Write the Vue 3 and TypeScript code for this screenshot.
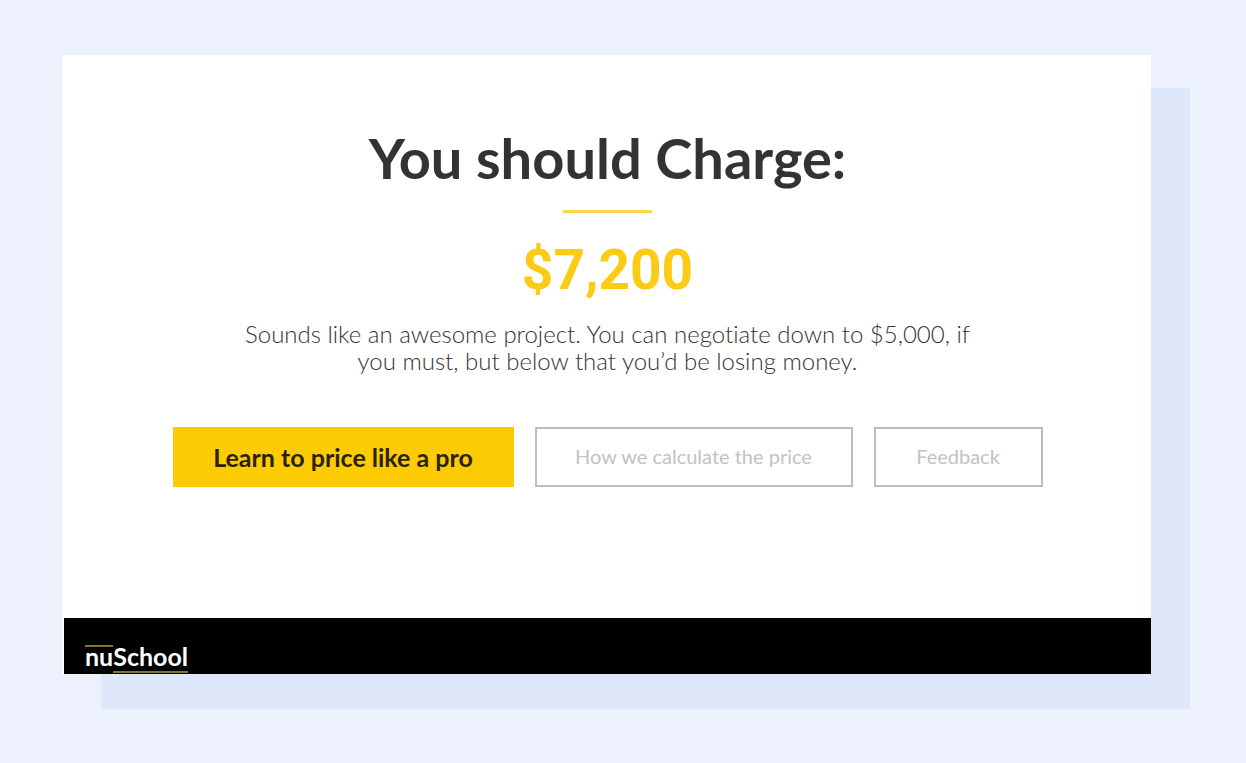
<script setup lang="ts">
interface Action {
  label: string
  kind: 'primary' | 'outline'
}

const price = '$7,200'
const actions: Action[] = [
  { label: 'Learn to price like a pro', kind: 'primary' },
  { label: 'How we calculate the price', kind: 'outline' },
  { label: 'Feedback', kind: 'outline' },
]
</script>

<template>
  <div class="page">
    <div class="card">
      <main class="result">
        <h1 class="title">You should Charge:</h1>
        <div class="rule"></div>
        <p class="price">{{ price }}</p>
        <p class="note">
          Sounds like an awesome project. You can negotiate down to $5,000, if<br />
          you must, but below that you’d be losing money.
        </p>
        <div class="actions">
          <button v-for="a in actions" :key="a.label" type="button" :class="['action', a.kind]">
            {{ a.label }}
          </button>
        </div>
      </main>
      <footer class="footer">
        <a class="logo" href="#"><span class="nu">nu</span><span class="school">School</span></a>
      </footer>
    </div>
  </div>
</template>

<style>
body {
  margin: 0;
  background: #edf1fe;
}
</style>

<style scoped>
.page {
  box-sizing: border-box;
  min-height: 100vh;
  padding: 55px 95px 89px 62px;
  background: #edf1fe;
  font-family: Lato, "Liberation Sans", sans-serif;
  font-variant-ligatures: none;
}
.card {
  background: #fff;
  box-shadow: 39px 35px 0 #dfe7fa, 39px 33px 0 #dfe7fa;
}
.result {
  display: flex;
  flex-direction: column;
  align-items: center;
  padding: 71px 24px 131px 26px;
  text-align: center;
}
.title {
  margin: 0;
  font-size: 56px;
  line-height: 64px;
  font-weight: 700;
  color: #333;
}
.rule {
  width: 89px;
  height: 3px;
  margin-top: 20px;
  background: #fbd54a;
}
.price {
  margin: 25px 0 0;
  font-family: Roboto, sans-serif;
  font-size: 55px;
  line-height: 64px;
  font-weight: 700;
  color: #fbcb16;
}
.note {
  margin: 18px 0 0;
  font-size: 24px;
  line-height: 27px;
  font-weight: 300;
  color: #333;
}
.actions {
  display: grid;
  grid-template-columns: 341fr 318fr 169fr;
  gap: 21px;
  width: 100%;
  max-width: 870px;
  margin-top: 53px;
}
.action {
  box-sizing: border-box;
  height: 60px;
  padding: 0;
  border: 0;
  font-family: inherit;
  font-variant-ligatures: inherit;
  cursor: pointer;
}
.primary {
  background: #fdcb04;
  color: #2a2205;
  font-size: 25px;
  font-weight: 700;
}
.outline {
  padding-bottom: 3px;
  background: #fff;
  border: 2px solid #bdbdbd;
  color: #c2c2c2;
  font-size: 20px;
  font-weight: 400;
}
.footer {
  display: flex;
  align-items: flex-end;
  height: 56px;
  margin-left: 2px;
  padding-left: 21px;
  background: #000;
}
.logo {
  display: flex;
  align-items: flex-end;
  color: #fff;
  font-size: 25px;
  line-height: 18px;
  font-weight: 700;
  text-decoration: none;
}
.nu,
.school {
  border: 0 solid #86742c;
}
.nu {
  border-top-width: 2px;
  margin-bottom: 9px;
}
.school {
  padding-bottom: 6px;
  border-bottom-width: 2px;
  margin-bottom: 1px;
}
</style>
